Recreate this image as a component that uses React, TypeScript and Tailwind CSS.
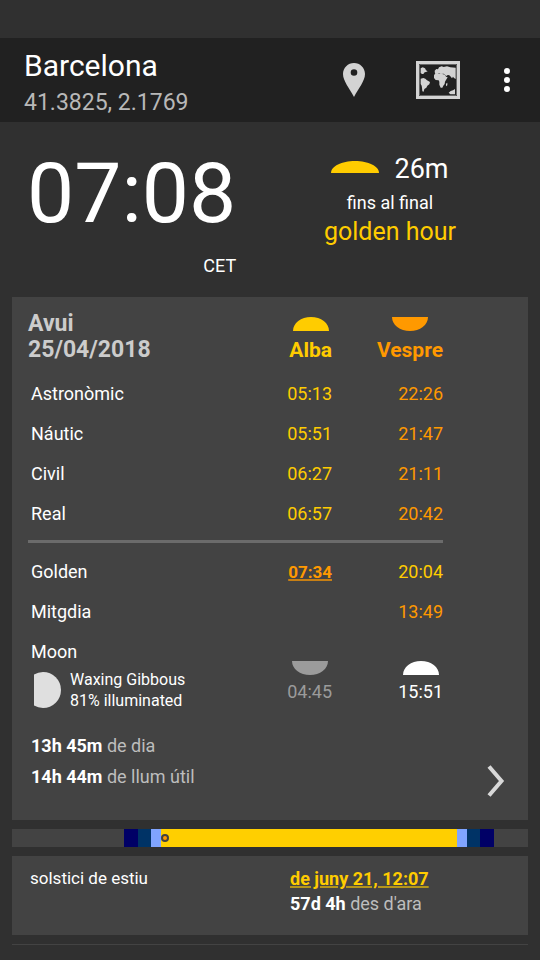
import React from 'react';

const ROBOTO = "font-['Roboto','Noto_Sans',sans-serif]";

type DomeProps = { className?: string; wide?: boolean; down?: boolean };

/* Half ellipse standing for a body above (or below) the horizon. */
function Dome({ className = '', wide, down }: DomeProps) {
  return (
    <svg
      aria-hidden="true"
      viewBox="0 0 36 14"
      preserveAspectRatio="none"
      className={`block fill-current ${wide ? 'h-3 w-12' : 'h-[14px] w-9'} ${className}`}
    >
      {down ? <path d="M0 0h36c0 8-8 14-18 14S0 8 0 0z" /> : <path d="M0 14h36c0-8-8-14-18-14S0 6 0 14z" />}
    </svg>
  );
}

function PinIcon() {
  return (
    <svg aria-hidden="true" viewBox="0 0 22 34" className="h-[34px] w-[22px]">
      <path
        fill="#d3d3d3"
        fillRule="evenodd"
        d="M11 0C5 0 0 4.8 0 11c0 7 6.500 14.500 11 23 4.500-8.500 11-16 11-23C22 4.800 17 0 11 0zm0 6.200a3.300 3.300 0 1 1 0 6.600 3.300 3.300 0 0 1 0-6.600z"
      />
    </svg>
  );
}

function MapIcon() {
  return (
    <svg aria-hidden="true" viewBox="288 63 132 114" className="h-[38px] w-11">
      <rect x="292.500" y="67.500" width="123" height="105" fill="none" stroke="#d3d3d3" strokeWidth="9" />
      <rect x="299" y="74" width="110" height="92" fill="none" stroke="#8a8a8a" strokeWidth="2" />
      <g fill="#d3d3d3">
        <path d="M302 85l6-3 7 3 3 6 5 3-5 2-4 1-4 5-4 0-4-3z" />
        <path d="M302 116l8-2 6 2 5 5 9 5-2 7-6 4-3 6-6 4-2 8-4-1-1-11-1-6-3-5z" />
        <path d="M344 92l5-5 5 1 3-6 8-3 6 2 10-2 10 3 16 1v34l-5-3-3-4-3 5-5-6-4-4-6 1-2 3-4-5-4-3-9 1-6-2-4 2-7-1z" />
        <path d="M342 106l3-5 7-2 7 3 5-1 11 3 3 6 5 2-5 8-3 5-1 7-4 5-3 6-5 0-4-9 0-9-2-4-9-1-5-6z" />
        <path d="M378 131l4-3 0 8-4 3z" />
        <path d="M386 158l6-5 7-2 6-4v16h-14z" />
      </g>
    </svg>
  );
}

const twilightRows = [
  { name: 'Astronòmic', dawn: '05:13', dusk: '22:26' },
  { name: 'Náutic', dawn: '05:51', dusk: '21:47' },
  { name: 'Civil', dawn: '06:27', dusk: '21:11' },
  { name: 'Real', dawn: '06:57', dusk: '20:42' },
];

const daySegments = [
  { span: 112, color: 'bg-[#434343]' },
  { span: 14, color: 'bg-[#000066]' },
  { span: 13, color: 'bg-[#003366]' },
  { span: 10, color: 'bg-[#80a4ff]' },
  { span: 296, color: 'bg-[#ffcf00]' },
  { span: 10, color: 'bg-[#80a4ff]' },
  { span: 13, color: 'bg-[#003366]' },
  { span: 14, color: 'bg-[#000066]' },
  { span: 34, color: 'bg-[#434343]' },
];

const NOW_PERCENT = (153 / 516) * 100;

export default function App() {
  return (
    <div className={`min-h-screen bg-[#303030] pt-[38px] text-lg text-white ${ROBOTO}`}>
      <header className="flex h-[84px] items-center bg-[#212121] pr-[26px] pl-6">
        <div className="flex-1 pt-[10px]">
          <h1 className="text-[30px] leading-9">Barcelona</h1>
          <p className="text-[23px] leading-[38px] text-[#b8b8b8]">41.3825, 2.1769</p>
        </div>
        <button type="button" aria-label="Ubicació" className="mr-[51px]">
          <PinIcon />
        </button>
        <button type="button" aria-label="Mapa" className="mr-10">
          <MapIcon />
        </button>
        <button type="button" aria-label="Més opcions" className="flex w-[14px] flex-col items-center gap-[3px]">
          <span className="size-[6px] rounded-full bg-white" />
          <span className="size-[6px] rounded-full bg-white" />
          <span className="size-[6px] rounded-full bg-white" />
        </button>
      </header>

      <main className="px-3">
        <section className="flex h-[175px] justify-between pr-[72px] pl-[15px]">
          <div className="pt-[30px] text-right">
            <p className="text-[84px] leading-[84px]">07:08</p>
            <p className="mt-[18px] leading-6">CET</p>
          </div>
          <div className="flex flex-col items-center pt-[29px]">
            <div className="flex items-center gap-[15px]">
              <Dome wide className="mb-1 text-[#ffcc00]" />
              <span className="text-[27px] leading-9">26m</span>
            </div>
            <p className="mt-1 leading-6">fins al final</p>
            <p className="text-[25px] leading-[34px] text-[#ffcc00]">golden hour</p>
          </div>
        </section>

        <section className="relative bg-[#434343] pt-[14px] pr-[85px] pb-7 pl-4">
          <table className="w-full">
            <thead>
              <tr className="h-[63px] align-top leading-[26px]">
                <th scope="col" className="text-left text-[23px] font-bold text-[#cccccc]">
                  Avui
                  <br />
                  25/04/2018
                </th>
                <th scope="col" className="w-[111px] pt-[6px] text-[21px] font-bold text-[#ffcc00]">
                  <div className="ml-auto flex w-fit flex-col items-center gap-[6px]">
                    <Dome />
                    Alba
                  </div>
                </th>
                <th scope="col" className="w-[111px] pt-[6px] text-[21px] font-bold text-[#ff9900]">
                  <div className="ml-auto flex w-fit flex-col items-center gap-[6px]">
                    <Dome down />
                    Vespre
                  </div>
                </th>
              </tr>
            </thead>
            <tbody className="text-right">
              {twilightRows.map((row) => (
                <tr key={row.name} className="h-10">
                  <th scope="row" className="pl-[3px] text-left font-normal">{row.name}</th>
                  <td className="text-[#ffcc00]">{row.dawn}</td>
                  <td className="text-[#ff9900]">{row.dusk}</td>
                </tr>
              ))}
            </tbody>
            <tbody className="text-right">
              <tr>
                <td colSpan={3} className="pt-[6px] pb-[9px]">
                  <hr className="h-[3px] border-0 bg-[#6b6b6b]" />
                </td>
              </tr>
              <tr className="h-10">
                <th scope="row" className="pl-[3px] text-left font-normal">Golden</th>
                <td className="text-[17px] font-bold text-[#ff9900] underline decoration-[#ff9900]/70 decoration-2">
                  07:34
                </td>
                <td className="text-[#ffcc00]">20:04</td>
              </tr>
              <tr className="h-10">
                <th scope="row" className="pl-[3px] text-left font-normal">Mitgdia</th>
                <td />
                <td className="text-[#ff9900]">13:49</td>
              </tr>
              <tr className="align-top">
                <th scope="row" className="pt-[6px] pl-[3px] text-left font-normal">
                  Moon
                  <div className="mt-[3px] flex items-center gap-[9px] pl-[3px] text-base leading-[21px]">
                    <svg aria-hidden="true" viewBox="0 0 27 36" className="h-9 w-[27px]">
                      <path fill="#dfdfdf" d="M0 2.500A18 18 0 0 1 9 0a18 18 0 0 1 0 36A18 18 0 0 1 0 33.500z" />
                    </svg>
                    <div>
                      Waxing Gibbous
                      <br />
                      81% illuminated
                    </div>
                  </div>
                </th>
                <td className="pt-[29px] text-[#9b9b9b]">
                  <div className="ml-auto flex w-fit flex-col items-center gap-[5px] leading-6">
                    <Dome down />
                    04:45
                  </div>
                </td>
                <td className="pt-[29px]">
                  <div className="ml-auto flex w-fit flex-col items-center gap-[5px] leading-6">
                    <Dome />
                    15:51
                  </div>
                </td>
              </tr>
            </tbody>
          </table>
          <div className="mt-[19px] pl-[3px] leading-[31px] text-[#bdbdbd]">
            <p>
              <b className="text-white">13h 45m</b> de dia
            </p>
            <p>
              <b className="text-white">14h 44m</b> de llum útil
            </p>
          </div>
          <button type="button" aria-label="Dia següent" className="absolute right-[23px] bottom-[22px]">
            <svg aria-hidden="true" viewBox="0 0 18 34" className="block h-[34px] w-[18px]">
              <path d="M2 2.500L14.500 17 2 31.500" fill="none" stroke="#d8d8d8" strokeWidth="4" />
            </svg>
          </button>
        </section>

        <div className="relative my-[9px] flex h-[18px]">
          {daySegments.map((segment, index) => (
            <div key={index} className={segment.color} style={{ flexGrow: segment.span, flexBasis: 0 }} />
          ))}
          <span
            className="absolute top-[5px] size-2 -translate-x-1/2 rounded-full border-2 border-[#434343] bg-[#ff9900]"
            style={{ left: `${NOW_PERCENT}%` }}
          />
        </div>

        <section className="flex bg-[#434343] pt-[10px] pb-[19px] pl-[18px] leading-[25px]">
          <h2 className="w-[260px] text-[17px] leading-[25px]">solstici de estiu</h2>
          <div className="text-[#bdbdbd]">
            <a href="#solstici" className="font-bold text-[#ffcc00] underline decoration-[#ffcc00]/60 decoration-2">
              de juny 21, 12:07
            </a>
            <p>
              <b className="text-white">57d 4h</b> des d'ara
            </p>
          </div>
        </section>

        <hr className="mt-[9px] border-0 border-t border-[#434343]" />
      </main>
    </div>
  );
}
